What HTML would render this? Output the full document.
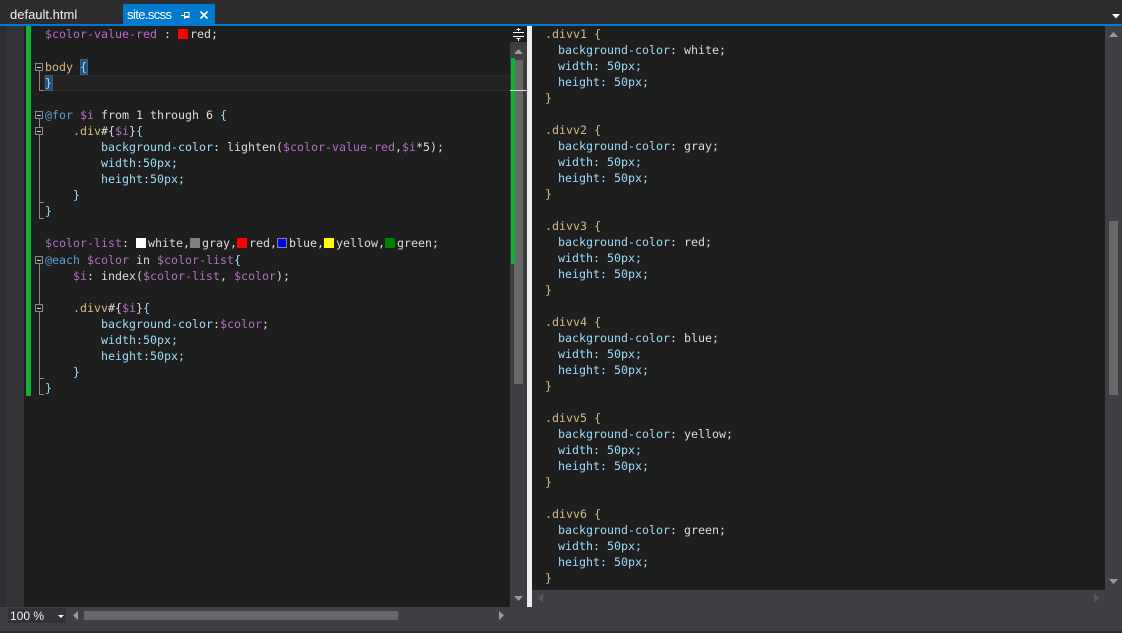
<!DOCTYPE html>
<html><head><meta charset="utf-8"><style>
html,body{margin:0;padding:0;width:1122px;height:633px;overflow:hidden;background:#3f3f46}
.a{position:absolute}
.t{position:absolute;white-space:pre;font:11.63px/16px "DejaVu Sans Mono","Liberation Mono",monospace;color:#dcdcdc;height:16px}
.v{color:#b56cc4}.k{color:#569cd6}.s{color:#d7ba7d}.p{color:#9cdcfe}.b{color:#9cdcfe}.w{color:#dcdcdc}
.c{display:inline-block;width:10px;height:10px;margin-right:2px;vertical-align:-1px}
</style></head><body>
<div class="a" style="left:0;top:0;width:1122px;height:24px;background:#2d2d30"></div>
<div class="a" style="left:10px;top:5px;font:13px/20px 'Liberation Sans',sans-serif;color:#f1f1f1">default.html</div>
<div class="a" style="left:123px;top:4px;width:92px;height:20px;background:#007acc"></div>
<div class="a" style="left:127px;top:5px;font:13px/20px 'Liberation Sans',sans-serif;color:#fff;letter-spacing:-.6px">site.scss</div>
<svg class="a" style="left:180px;top:8px" width="32" height="14" shape-rendering="crispEdges"><path d="M1 7.5H4.5M4.5 4V11M4.5 4.5H9V9.5H4.5M4.5 8.5H9" stroke="#fff" fill="none"/><path d="M20.5 3.5L27.5 10.5M27.5 3.5L20.5 10.5" stroke="#fff" stroke-width="1.6" fill="none" shape-rendering="auto"/></svg>
<svg class="a" style="left:1112px;top:14px" width="9" height="5"><path d="M0 0H8L4 4.5Z" fill="#fff"/></svg>
<div class="a" style="left:0;top:24px;width:1122px;height:2px;background:#007acc"></div>

<div class="a" style="left:0;top:26px;width:6px;height:581px;background:#2d2d30"></div>
<div class="a" style="left:6px;top:26px;width:18px;height:581px;background:#333337"></div>
<div class="a" style="left:24px;top:26px;width:486px;height:581px;background:#1e1e1e"></div>
<div class="a" style="left:26px;top:26px;width:5px;height:370px;background:#10b432"></div>
<div class="a" style="left:44px;top:75px;width:466px;height:16px;box-sizing:border-box;border:1px solid #2a2a2a;border-right:0;background:#222"></div>
<div class="a" style="left:80px;top:59px;width:8px;height:16px;box-sizing:border-box;border:1px solid #3c5f7c;background:#264f78"></div>
<div class="a" style="left:45px;top:75px;width:8px;height:16px;box-sizing:border-box;border:1px solid #3c5f7c;background:#264f78"></div>

<svg class="a" style="left:30px;top:55px" width="20" height="350" viewBox="30 55 20 350" fill="none" stroke="#8a8a8a" shape-rendering="crispEdges">
<path d="M39.5 71V90.5H44M39.5 119V127M39.5 135V218.5H44M39.5 202.5H44M39.5 263V304M39.5 312V394.5H44M39.5 378.5H44"/>
<g fill="#1e1e1e"><rect x="35.5" y="63.5" width="7" height="7"/><rect x="35.5" y="111.5" width="7" height="7"/><rect x="35.5" y="127.5" width="7" height="7"/><rect x="35.5" y="256.5" width="7" height="7"/><rect x="35.5" y="304.5" width="7" height="7"/></g>
<path stroke="#ccc" d="M37 67.5H41M37 115.5H41M37 131.5H41M37 260.5H41M37 308.5H41"/>
</svg>

<div class="t" style="left:45px;top:26px"><span class="v">$color-value-red</span> : <span class="c" style="background:#f00;vertical-align:-1px"></span>red;</div>
<div class="t" style="left:45px;top:59px"><span class="s">body</span> <span class="b">{</span></div>
<div class="t" style="left:45px;top:75px"><span class="b">}</span></div>
<div class="t" style="left:45px;top:107px"><span class="k">@for</span> <span class="v">$i</span> from 1 through 6 <span class="b">{</span></div>
<div class="t" style="left:45px;top:123px">    <span class="s">.div</span>#{<span class="v">$i</span>}<span class="b">{</span></div>
<div class="t" style="left:45px;top:139px">        <span class="p">background-color</span>: lighten(<span class="v">$color-value-red</span>,<span class="v">$i</span>*5);</div>
<div class="t" style="left:45px;top:155px">        <span class="p">width:50px;</span></div>
<div class="t" style="left:45px;top:171px">        <span class="p">height:50px;</span></div>
<div class="t" style="left:45px;top:187px">    <span class="b">}</span></div>
<div class="t" style="left:45px;top:203px"><span class="b">}</span></div>
<div class="t" style="left:45px;top:235px"><span class="v">$color-list</span>: <span class="c" style="background:#fff"></span>white,<span class="c" style="background:#808080"></span>gray,<span class="c" style="background:#f00"></span>red,<span class="c" style="background:#00f;box-shadow:inset 0 0 0 1px #888"></span>blue,<span class="c" style="background:#ff0"></span>yellow,<span class="c" style="background:#008000"></span>green;</div>
<div class="t" style="left:45px;top:252px"><span class="k">@each</span> <span class="v">$color</span> in <span class="v">$color-list</span><span class="b">{</span></div>
<div class="t" style="left:45px;top:268px">    <span class="v">$i</span>: index(<span class="v">$color-list</span>, <span class="v">$color</span>);</div>
<div class="t" style="left:45px;top:300px">    <span class="s">.divv</span>#{<span class="v">$i</span>}<span class="b">{</span></div>
<div class="t" style="left:45px;top:316px">        <span class="p">background-color</span>:<span class="v">$color</span>;</div>
<div class="t" style="left:45px;top:332px">        <span class="p">width:50px;</span></div>
<div class="t" style="left:45px;top:348px">        <span class="p">height:50px;</span></div>
<div class="t" style="left:45px;top:364px">    <span class="b">}</span></div>
<div class="t" style="left:45px;top:380px"><span class="b">}</span></div>

<div class="a" style="left:510px;top:26px;width:17px;height:581px;background:#3e3e42"></div>
<div class="a" style="left:510px;top:26px;width:17px;height:16px;background:#1e1e1e"></div>
<svg class="a" style="left:512px;top:27px" width="13" height="14" shape-rendering="crispEdges"><path d="M1 5.5H12M1 9.5H12M6.5 1V4M6.5 11V14" stroke="#fff" fill="none"/><path d="M4.5 2H8.5V3H4.5ZM4.5 11H8.5V12H4.5Z" fill="#fff"/></svg>
<svg class="a" style="left:514px;top:49px" width="10" height="6"><path d="M0 5H9L4.5 0Z" fill="#999"/></svg>
<div class="a" style="left:514px;top:60px;width:9px;height:324px;background:#686868"></div>
<div class="a" style="left:511px;top:58px;width:4px;height:206px;background:#10b432"></div>
<div class="a" style="left:510px;top:90px;width:17px;height:1px;background:#e0e0e0"></div>
<svg class="a" style="left:514px;top:596px" width="10" height="6"><path d="M0 0H9L4.5 5Z" fill="#999"/></svg>

<div class="a" style="left:527px;top:26px;width:5px;height:581px;background:#eeeeee"></div>

<div class="a" style="left:532px;top:26px;width:573px;height:564px;background:#1e1e1e"></div>
<div class="t" style="left:545px;top:26px"><span class="s">.divv1</span> <span class="s">{</span></div>
<div class="t" style="left:544px;top:42px">  <span class="p">background-color</span>: white;</div>
<div class="t" style="left:544px;top:58px">  <span class="p">width: 50px;</span></div>
<div class="t" style="left:544px;top:74px">  <span class="p">height: 50px;</span></div>
<div class="t" style="left:545px;top:90px"><span class="s">}</span></div>
<div class="t" style="left:545px;top:122px"><span class="s">.divv2</span> <span class="s">{</span></div>
<div class="t" style="left:544px;top:138px">  <span class="p">background-color</span>: gray;</div>
<div class="t" style="left:544px;top:154px">  <span class="p">width: 50px;</span></div>
<div class="t" style="left:544px;top:170px">  <span class="p">height: 50px;</span></div>
<div class="t" style="left:545px;top:186px"><span class="s">}</span></div>
<div class="t" style="left:545px;top:218px"><span class="s">.divv3</span> <span class="s">{</span></div>
<div class="t" style="left:544px;top:234px">  <span class="p">background-color</span>: red;</div>
<div class="t" style="left:544px;top:250px">  <span class="p">width: 50px;</span></div>
<div class="t" style="left:544px;top:266px">  <span class="p">height: 50px;</span></div>
<div class="t" style="left:545px;top:282px"><span class="s">}</span></div>
<div class="t" style="left:545px;top:314px"><span class="s">.divv4</span> <span class="s">{</span></div>
<div class="t" style="left:544px;top:330px">  <span class="p">background-color</span>: blue;</div>
<div class="t" style="left:544px;top:346px">  <span class="p">width: 50px;</span></div>
<div class="t" style="left:544px;top:362px">  <span class="p">height: 50px;</span></div>
<div class="t" style="left:545px;top:378px"><span class="s">}</span></div>
<div class="t" style="left:545px;top:410px"><span class="s">.divv5</span> <span class="s">{</span></div>
<div class="t" style="left:544px;top:426px">  <span class="p">background-color</span>: yellow;</div>
<div class="t" style="left:544px;top:442px">  <span class="p">width: 50px;</span></div>
<div class="t" style="left:544px;top:458px">  <span class="p">height: 50px;</span></div>
<div class="t" style="left:545px;top:474px"><span class="s">}</span></div>
<div class="t" style="left:545px;top:506px"><span class="s">.divv6</span> <span class="s">{</span></div>
<div class="t" style="left:544px;top:522px">  <span class="p">background-color</span>: green;</div>
<div class="t" style="left:544px;top:538px">  <span class="p">width: 50px;</span></div>
<div class="t" style="left:544px;top:554px">  <span class="p">height: 50px;</span></div>
<div class="t" style="left:545px;top:570px"><span class="s">}</span></div>

<svg class="a" style="left:1109px;top:32px" width="10" height="6"><path d="M0 5H9L4.5 0Z" fill="#999"/></svg>
<div class="a" style="left:1109px;top:221px;width:9px;height:174px;background:#686868"></div>
<svg class="a" style="left:1109px;top:579px" width="10" height="6"><path d="M0 0H9L4.5 5Z" fill="#999"/></svg>
<svg class="a" style="left:538px;top:593px" width="6" height="11"><path d="M5 0V10L0 5Z" fill="#55555a"/></svg>
<svg class="a" style="left:1094px;top:593px" width="6" height="11"><path d="M0 0V10L5 5Z" fill="#55555a"/></svg>

<div class="a" style="left:8px;top:608px;width:58px;height:15px;background:#333337"></div>
<div class="a" style="left:10px;top:608px;font:12px/16px 'Liberation Sans',sans-serif;color:#e8f2ff">100 %</div>
<svg class="a" style="left:58px;top:615px" width="7" height="4"><path d="M0 0H6L3 3Z" fill="#fff"/></svg>
<svg class="a" style="left:73px;top:611px" width="6" height="10"><path d="M5 0V9L0 4.5Z" fill="#999"/></svg>
<div class="a" style="left:84px;top:611px;width:314px;height:9px;background:#686868"></div>
<svg class="a" style="left:499px;top:611px" width="6" height="10"><path d="M0 0V9L5 4.5Z" fill="#999"/></svg>
<div class="a" style="left:0;top:631px;width:1122px;height:2px;background:#2d2d30"></div>
</body></html>
